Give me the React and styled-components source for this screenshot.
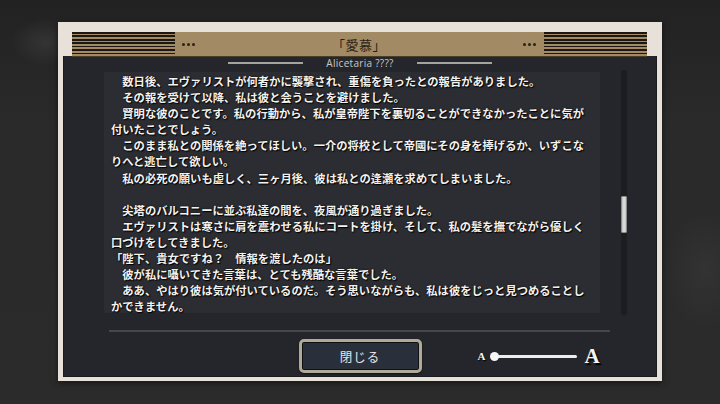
import React from "react";
import styled, { createGlobalStyle } from "styled-components";

const Global = createGlobalStyle`
  html, body { margin: 0; padding: 0; }
  body {
    width: 720px;
    height: 404px;
    overflow: hidden;
    background:
      radial-gradient(ellipse 34px 24px at 45px 42px, rgba(255,255,255,0.07), transparent),
      radial-gradient(ellipse 40px 60px at 705px 270px, rgba(255,255,255,0.04), transparent),
      linear-gradient(#222222, #2a2a2a 30%, #2b2b2b);
    font-family: "Noto Sans CJK JP", "Noto Sans", sans-serif;
  }
`;

const Stage = styled.div`
  height: 404px;
  display: flex;
  justify-content: center;
  align-items: flex-start;
  padding-top: 22px;
  box-sizing: border-box;
`;

const Frame = styled.div`
  width: 604px;
  box-sizing: border-box;
  padding: 10px 5px 4px 5px;
  background: #e7e1d9;
  display: flex;
  flex-direction: column;
  box-shadow: 0 2px 6px rgba(0,0,0,0.5);
`;

const HeaderBand = styled.div`
  margin: 0 10px 0 9px;
  height: 24px;
  background: #a18a64;
  display: flex;
  align-items: center;
  position: relative;
  z-index: 1;
  box-shadow: 0 1px 0 #4a3d28;
`;

const Stripes = styled.div`
  width: 103px;
  align-self: stretch;
  background: repeating-linear-gradient(
    to bottom,
    #1c1710 0px,
    #1c1710 1.7px,
    #a18a64 1.7px,
    #a18a64 3.45px
  );
`;

const Dots = styled.div`
  display: flex;
  gap: 2px;
  margin: ${(p) => (p.$right ? "0 8px 0 0" : "0 0 0 7px")};
  span {
    width: 3px;
    height: 3px;
    border-radius: 50%;
    background: #2a2218;
  }
`;

const Title = styled.div`
  flex: 1;
  text-align: center;
  font-size: 13px;
  color: #2b2318;
  font-family: "Noto Sans CJK JP", sans-serif;
  letter-spacing: 0.5px;
`;

const Panel = styled.div`
  background: #25262b;
  border: 1px solid #1a1b1f;
  border-top: none;
  display: flex;
  flex-direction: column;
  padding-bottom: 3px;
`;

const Subtitle = styled.div`
  height: 14px;
  display: flex;
  justify-content: center;
  align-items: center;
  gap: 23px;
`;

const SubLine = styled.div`
  width: 75px;
  height: 1.5px;
  background: #a3a3a3;
`;

const SubText = styled.div`
  font-family: "Open Sans", "Noto Sans", sans-serif;
  font-size: 10px;
  color: #c9c9c9;
  letter-spacing: 0.3px;
  line-height: 14px;
`;

const ContentRow = styled.div`
  margin-top: 2px;
  height: 241px;
  display: flex;
  padding-left: 40px;
`;

const TextBox = styled.div`
  width: 496px;
  height: 241px;
  background: #2c2d32;
  padding: 1px 0 0 7px;
  box-sizing: border-box;
`;

const Para = styled.p`
  margin: 0;
  font-family: "Noto Sans CJK JP", sans-serif;
  font-weight: 700;
  font-size: 11.3px;
  line-height: 16.1px;
  color: #f4f2ee;
  white-space: nowrap;
  text-indent: ${(p) => (p.$noIndent ? "0" : "1em")};
  min-height: 16.1px;
  text-shadow: 1px 1px 1px #000, 0 0 2px rgba(0,0,0,0.8);
`;

const ScrollTrack = styled.div`
  margin-left: 21px;
  margin-top: -2px;
  width: 6px;
  height: 245px;
  background: #1c1d21;
  border-radius: 2px;
  display: flex;
  flex-direction: column;
`;

const ScrollThumb = styled.div`
  margin-top: 126px;
  height: 37px;
  width: 6px;
  box-sizing: border-box;
  border: 1px solid #8d8d8d;
  border-radius: 1px;
  background: linear-gradient(to right, #bdbdbd, #e2e2e2 50%, #c4c4c4);
`;

const Divider = styled.div`
  margin: 17px 46px 0 45px;
  height: 2px;
  background: #43474e;
`;

const BottomRow = styled.div`
  margin-top: 7px;
  display: grid;
  grid-template-columns: 1fr auto 1fr;
  align-items: center;
`;

const CloseButton = styled.button`
  grid-column: 2;
  width: 123px;
  height: 34px;
  box-sizing: border-box;
  border: 3px solid #b2aa98;
  border-radius: 5px;
  background: #29303c;
  box-shadow: inset 0 0 0 1px #0f1115, 0 1px 2px rgba(0,0,0,0.6);
  color: #e6e6e6;
  font-family: "Noto Sans CJK JP", sans-serif;
  font-size: 12.5px;
  letter-spacing: 1px;
  padding: 0;
  cursor: pointer;
`;

const SliderWrap = styled.div`
  grid-column: 3;
  margin-left: 56px;
  display: flex;
  align-items: center;
`;

const LetterA = styled.span`
  font-family: "Liberation Serif", "DejaVu Serif", serif;
  font-weight: 700;
  color: #f4f4f4;
  font-size: ${(p) => (p.$big ? "21px" : "11px")};
  line-height: 1;
  text-shadow: ${(p) => (p.$big ? "2px 2px 1px #000" : "1px 1px 1px #000")};
  margin-left: ${(p) => (p.$big ? "7px" : "0")};
`;

const Track = styled.div`
  position: relative;
  width: 87px;
  height: 9px;
  margin-left: 5px;
  display: flex;
  align-items: center;
  &::before {
    content: "";
    position: absolute;
    left: 4px;
    right: 0;
    top: 3px;
    height: 3px;
    border-radius: 2px;
    background: #ececec;
  }
`;

const Thumb = styled.div`
  position: relative;
  width: 9px;
  height: 9px;
  border-radius: 50%;
  background: #f6f6f6;
`;

const paragraphs = [
  { t: "数日後、エヴァリストが何者かに襲撃され、重傷を負ったとの報告がありました。" },
  { t: "その報を受けて以降、私は彼と会うことを避けました。" },
  { t: ["賢明な彼のことです。私の行動から、私が皇帝陛下を裏切ることができなかったことに気が", "付いたことでしょう。"] },
  { t: ["このまま私との関係を絶ってほしい。一介の将校として帝國にその身を捧げるか、いずこな", "りへと逃亡して欲しい。"] },
  { t: "私の必死の願いも虚しく、三ヶ月後、彼は私との逢瀬を求めてしまいました。" },
  { t: "" },
  { t: "尖塔のバルコニーに並ぶ私達の間を、夜風が通り過ぎました。" },
  { t: ["エヴァリストは寒さに肩を震わせる私にコートを掛け、そして、私の髪を撫でながら優しく", "口づけをしてきました。"] },
  { t: "「陛下、貴女ですね？　情報を渡したのは」", noIndent: true },
  { t: "彼が私に囁いてきた言葉は、とても残酷な言葉でした。" },
  { t: ["ああ、やはり彼は気が付いているのだ。そう思いながらも、私は彼をじっと見つめることし", "かできません。"] },
];

export default function App() {
  return (
    <>
      <Global />
      <Stage>
        <Frame>
          <HeaderBand>
            <Stripes />
            <Dots><span /><span /><span /></Dots>
            <Title>「愛慕」</Title>
            <Dots $right><span /><span /><span /></Dots>
            <Stripes />
          </HeaderBand>
          <Panel>
            <Subtitle>
              <SubLine />
              <SubText>Alicetaria ????</SubText>
              <SubLine />
            </Subtitle>
            <ContentRow>
              <TextBox>
                {paragraphs.map((p, i) => (
                  <Para key={i} $noIndent={p.noIndent}>
                    {Array.isArray(p.t)
                      ? p.t.map((line, j) => (
                          <React.Fragment key={j}>
                            {j > 0 && <br />}
                            {line}
                          </React.Fragment>
                        ))
                      : p.t}
                  </Para>
                ))}
              </TextBox>
              <ScrollTrack>
                <ScrollThumb />
              </ScrollTrack>
            </ContentRow>
            <Divider />
            <BottomRow>
              <CloseButton>閉じる</CloseButton>
              <SliderWrap>
                <LetterA>A</LetterA>
                <Track>
                  <Thumb />
                </Track>
                <LetterA $big>A</LetterA>
              </SliderWrap>
            </BottomRow>
          </Panel>
        </Frame>
      </Stage>
    </>
  );
}
